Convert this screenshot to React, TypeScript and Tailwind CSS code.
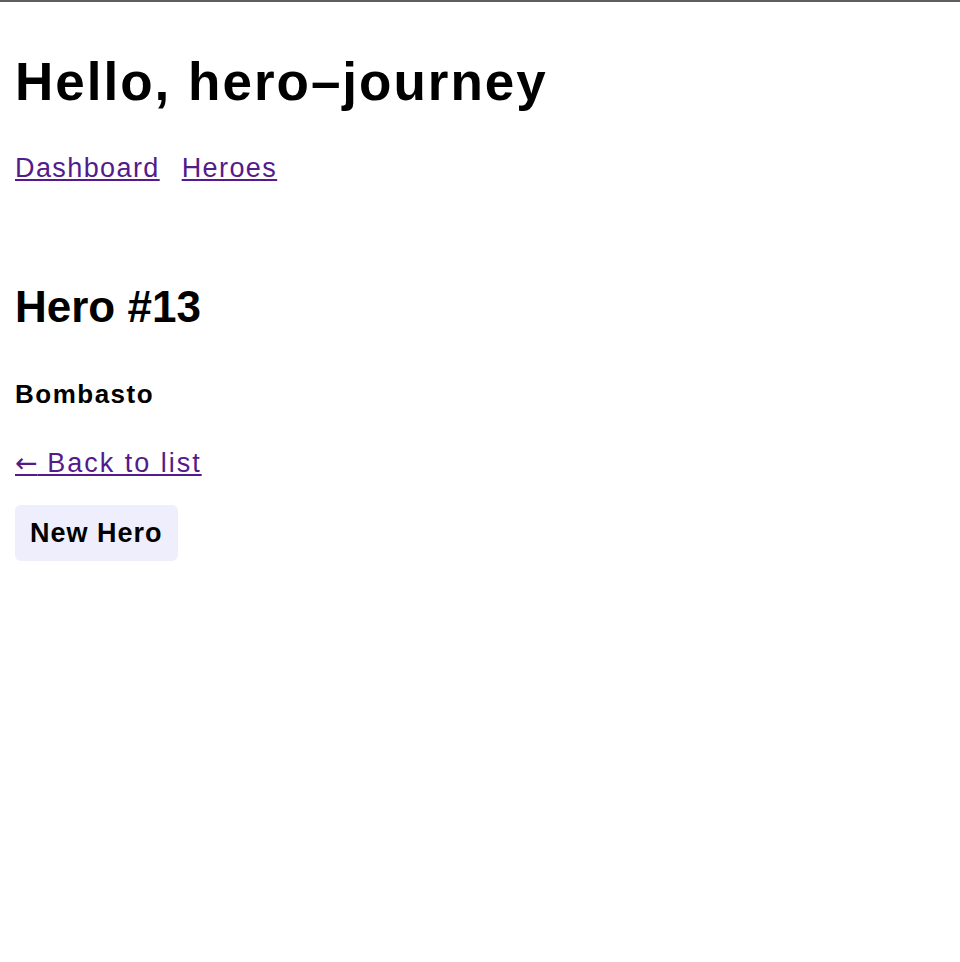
export default function App() {
  return (
    <div className="min-h-screen border-t-2 border-[#5f5f5f] bg-white px-[15px] font-['Liberation_Sans',Arial,sans-serif] text-black">
      <h1 className="mt-[53px] text-[53px] font-bold leading-none tracking-[2px]">Hello, hero–journey</h1>
      <nav className="mt-[47px] flex gap-[22px] text-[27px] leading-none tracking-[1.4px] text-[#551a8b]">
        <a href="#" className="underline">Dashboard</a>
        <a href="#" className="underline">Heroes</a>
      </nav>
      <h2 className="mt-[103px] text-[44px] font-bold leading-none">Hero #13</h2>
      <h3 className="mt-[52px] text-[26px] font-bold leading-none tracking-[1.5px]">Bombasto</h3>
      <a href="#" className="mt-[42px] block w-fit text-[27px] leading-none tracking-[2px] text-[#551a8b] underline">
        <span className="font-['DejaVu_Sans',sans-serif] tracking-normal">←</span> Back to list
      </a>
      <button className="mt-[28px] flex h-[56px] items-center rounded-[6px] bg-[#eeeefd] px-[15px] text-[27px] font-bold leading-none tracking-[1px]">
        New Hero
      </button>
    </div>
  );
}
